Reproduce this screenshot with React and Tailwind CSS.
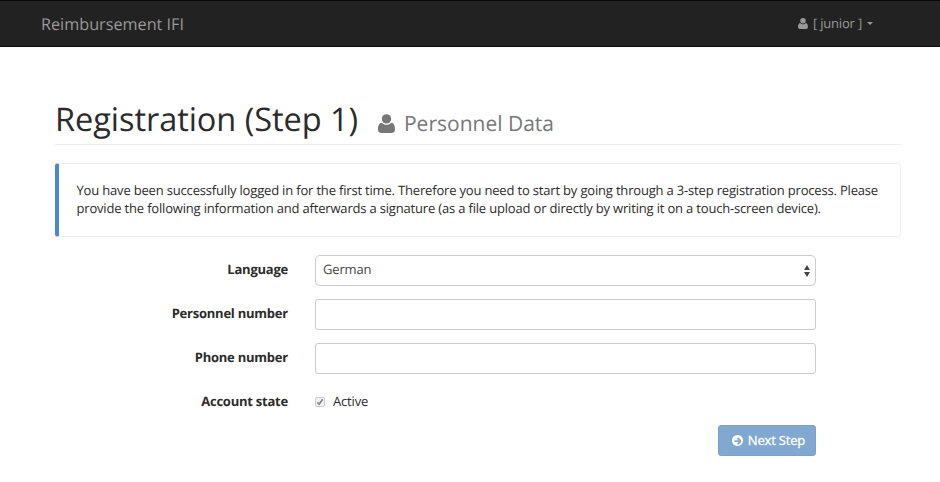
import React from "react";

function UserIcon({ className }) {
  return (
    <svg className={className} viewBox="0 0 17 19" fill="currentColor">
      <circle cx="8.5" cy="4.900" r="4.700" />
      <path d="M3.900 8.700C5 10 6.600 10.800 8.500 10.800S12 10 13.100 8.700C16 8.900 17 11.500 17 15.600C17 17.700 15.800 18.900 13.900 18.900H3.100C1.200 18.900 0 17.700 0 15.600C0 11.500 1 8.900 3.900 8.700z" />
    </svg>
  );
}

function ArrowCircleIcon({ className }) {
  return (
    <svg className={className} viewBox="128 128 1536 1536" fill="currentColor">
      <path d="M1413 896q0-27-18-45l-362-362q-18-18-45-18t-45 18l-91 91q-18 18-18 45t18 45l189 189h-502q-26 0-45 19t-19 45v128q0 26 19 45t45 19h502l-189 189q-19 19-19 45t19 45l91 91q18 18 45 18t45-18l362-362q18-18 18-45zm251 0q0 209-103 385.500t-279.500 279.500-385.500 103-385.500-103-279.500-279.500-103-385.500 103-385.500 279.500-279.500 385.500-103 385.500 103 279.500 279.500 103 385.500z" />
    </svg>
  );
}

function Row({ label, children }) {
  return (
    <div className="flex h-[31px] mb-[13px]">
      <label className="w-[233px] mr-[27px] pt-[5px] text-right font-bold tracking-[-0.23px]">{label}</label>
      {children}
    </div>
  );
}

const field = "w-[501px] h-[31px] border border-[#ccc] bg-white";

export default function App() {
  return (
    <div className="h-[482px] overflow-hidden bg-white text-[#2b2b2b] text-[13px] leading-[18px] tracking-[-0.178px] font-['Open_Sans',sans-serif] [text-rendering:geometricPrecision]">
      <nav className="h-[47px] bg-[#222] border-y border-[#080808] flex justify-between items-center pl-[41px] pr-[67px] text-[#999]">
        <span className="text-[16.25px] pt-px tracking-[-0.02px]">Reimbursement IFI</span>
        <span className="flex items-center">
          <UserIcon className="w-[10px] h-[11px] mr-[5px]" />
          <span className="pb-[2px]">[ junior ]</span>
          <svg className="ml-[5px]" width="6" height="3" viewBox="0 0 6 3" fill="currentColor"><path d="M0 0h6L3 3z" /></svg>
        </span>
      </nav>
      <main className="ml-[55px] w-[846px] pt-[49px]">
        <header className="h-[49px] border-b border-[#eee] flex items-start">
          <h1 className="text-[32.5px] leading-[46px] tracking-[-0.05px]">Registration (Step 1)</h1>
          <span className="flex items-center ml-[20px] mt-[18px] text-[21px] text-[#777] tracking-normal">
            <UserIcon className="w-[17px] h-[19px] mr-[9px]" />
            Personnel Data
          </span>
        </header>
        <section className="mt-[18px] h-[74px] border border-[#eee] border-l-4 border-l-[#4a89cd] rounded-[3px] pl-[17.5px] pt-[17px]">
          <p className="whitespace-nowrap">You have been successfully logged in for the first time. Therefore you need to start by going through a 3-step registration process. Please<br />provide the following information and afterwards a signature (as a file upload or directly by writing it on a touch-screen device).</p>
        </section>
        <form className="mt-[18px]">
          <Row label="Language">
            <div className={field + " rounded-[5px] flex items-center justify-between pl-[7px] pr-[5px]"}>
              <span className="pb-[3px] text-[#444]">German</span>
              <svg width="6" height="12" viewBox="0 0 6 12" fill="#444"><path d="M3 0L6 5H0zM3 12L0 7h6z" /></svg>
            </div>
          </Row>
          <Row label="Personnel number"><input className={field + " rounded-[3px]"} /></Row>
          <Row label="Phone number"><input className={field + " rounded-[3px]"} /></Row>
          <Row label="Account state">
            <span className="flex items-start pt-[5px]">
              <span className="mt-[5px] w-[10px] h-[10px] border border-[#ccc] bg-[#f3f3f3] rounded-[2px] mr-[8px] flex items-center justify-center">
                <svg width="8" height="8" viewBox="0 0 8 8" fill="none" stroke="#888" strokeWidth="1.8"><path d="M1.300 4.300L3.200 6.200L6.700 1.200" /></svg>
              </span>
              Active
            </span>
          </Row>
        </form>
        <button className="ml-[663px] mt-[-6px] w-[98px] h-[31px] rounded-[3px] border border-[#7ba1ca] bg-[#81a8d1] text-white flex items-center justify-center gap-[5px] pl-[3px]">
          <ArrowCircleIcon className="w-[11px] h-[11px]" />
          <span className="pb-[2px] [-webkit-text-stroke:0.3px_white]">Next Step</span>
        </button>
      </main>
    </div>
  );
}
